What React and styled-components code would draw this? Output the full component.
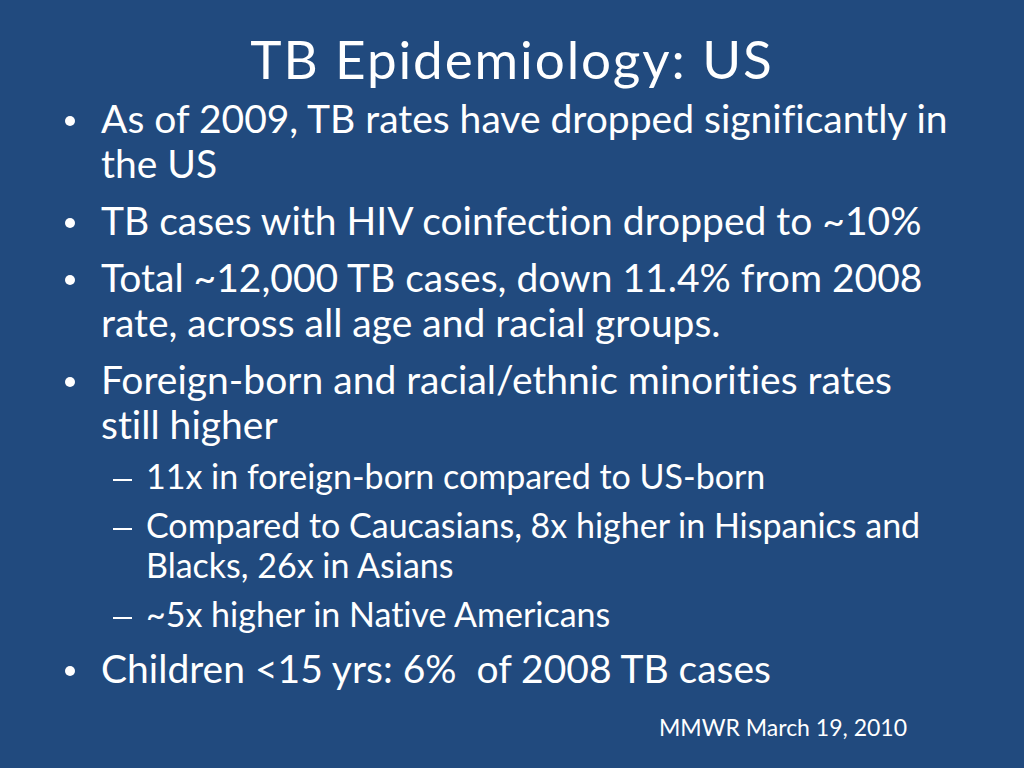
import React from "react";
import styled, { createGlobalStyle } from "styled-components";

const GlobalStyle = createGlobalStyle`
  html, body {
    margin: 0;
    padding: 0;
    background: #214a7e;
  }
  body {
    font-family: "Lato", "Open Sans", sans-serif;
    font-variant-ligatures: none;
    color: #ffffff;
  }
`;

const Slide = styled.main`
  width: 1024px;
  height: 768px;
  box-sizing: border-box;
  padding: 27px 72px 0 65px;
  background: #214a7e;
  display: flex;
  flex-direction: column;
  overflow: hidden;
`;

const Title = styled.h1`
  margin: 0 -72px 0 -65px;
  font-size: 53px;
  line-height: 64px;
  font-weight: 400;
  letter-spacing: 1.9px;
  text-align: center;
  color: #ffffff;
`;

const BulletList = styled.ul`
  list-style: none;
  margin: 5px 0 0;
  padding: 0;
`;

const Item = styled.li`
  display: flex;
  align-items: flex-start;
  font-size: 39px;
  line-height: 45px;

  & + & {
    margin-top: 12px;
  }
`;

const Dot = styled.span`
  flex: 0 0 36px;
  display: flex;
  height: 45px;
  align-items: flex-start;

  &::before {
    content: "";
    width: 10px;
    height: 10px;
    margin-top: 20px;
    border-radius: 50%;
    background: #ffffff;
  }
`;

const ItemBody = styled.div`
  flex: 1;
  min-width: 0;
`;

const SubList = styled.ul`
  list-style: none;
  margin: 7px 0 0 12px;
  padding: 0;
`;

const SubItem = styled.li`
  display: flex;
  align-items: flex-start;
  font-size: 34px;
  line-height: 40px;
  margin-top: 9px;
`;

const Dash = styled.span`
  flex: 0 0 33px;
  display: flex;
  height: 40px;
  align-items: flex-start;

  &::before {
    content: "";
    width: 19px;
    height: 2px;
    margin-top: 23px;
    background: #ffffff;
  }
`;

const Source = styled.p`
  margin: 22px 45px 0 0;
  align-self: flex-end;
  font-size: 23px;
  line-height: 28px;
`;

const points = [
  { text: "As of 2009, TB rates have dropped significantly in the US" },
  { text: "TB cases with HIV coinfection dropped to ~10%" },
  { text: "Total ~12,000 TB cases, down 11.4% from 2008 rate, across all age and racial groups." },
  {
    text: "Foreign-born and racial/ethnic minorities rates still higher",
    subs: [
      "11x in foreign-born compared to US-born",
      "Compared to Caucasians, 8x higher in Hispanics and Blacks, 26x in Asians",
      "~5x higher in Native Americans",
    ],
  },
  { text: "Children <15 yrs: 6%\u00a0 of 2008 TB cases" },
];

export default function App() {
  return (
    <>
      <GlobalStyle />
      <Slide>
        <Title>TB Epidemiology: US</Title>
        <BulletList>
          {points.map((p) => (
            <Item key={p.text}>
              <Dot />
              <ItemBody>
                {p.text}
                {p.subs && (
                  <SubList>
                    {p.subs.map((s) => (
                      <SubItem key={s}>
                        <Dash />
                        <span>{s}</span>
                      </SubItem>
                    ))}
                  </SubList>
                )}
              </ItemBody>
            </Item>
          ))}
        </BulletList>
        <Source>MMWR March 19, 2010</Source>
      </Slide>
    </>
  );
}
